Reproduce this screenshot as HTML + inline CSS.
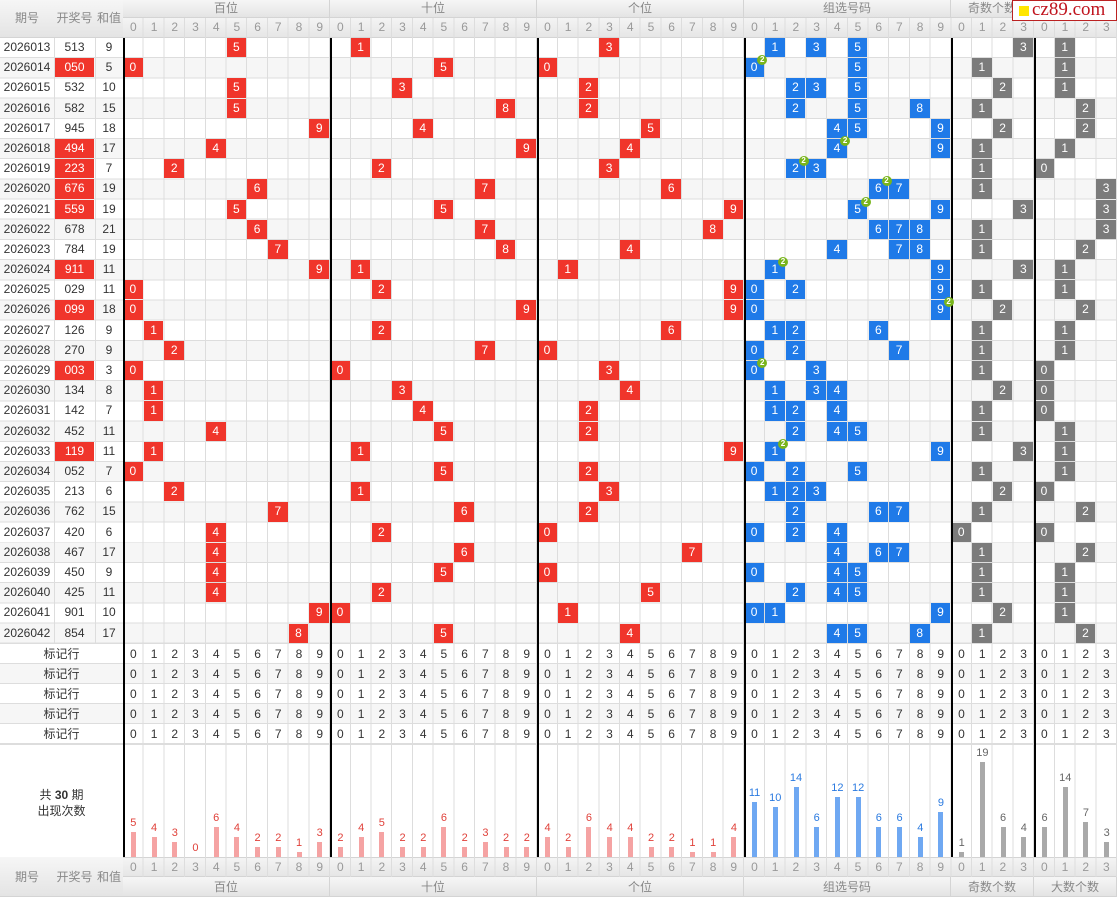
<!DOCTYPE html>
<html><head><meta charset="utf-8"><style>
*{margin:0;padding:0;box-sizing:border-box}
body{width:1117px;height:897px;position:relative;overflow:hidden;background:#fff;font-family:"Liberation Sans","Noto Sans CJK SC",sans-serif;font-size:12px;color:#333}
.a{position:absolute}
.hd{position:absolute;background:linear-gradient(#f6f6f6,#e4e4e4);color:#888;text-align:center;border-right:1px solid #d4d4d4;border-bottom:1px solid #d4d4d4}
.grid{position:absolute;left:0;top:38px;width:1117px;height:606px;
background:repeating-linear-gradient(to bottom,transparent 0 19.19px,#ddd 19.19px 20.19px),repeating-linear-gradient(to bottom,#fff 0 20.19px,#f6f6f6 20.19px 40.38px)}
.vg{position:absolute;left:123px;top:38px;width:994px;height:819px;background:repeating-linear-gradient(to right,transparent 0 19.708px,#ddd 19.708px 20.708px)}
.mk{position:absolute;left:0;top:644px;width:1117px;height:100px;background:repeating-linear-gradient(to bottom,transparent 0 19px,#ddd 19px 20px),repeating-linear-gradient(to bottom,#fff 0 20px,#f6f6f6 20px 40px)}
.vl{position:absolute;width:1px;background:#ddd}
.bl{position:absolute;width:1.5px;background:#000;top:38px;height:819px}
i{position:absolute;font-style:normal;width:19.7px;height:19.2px;line-height:19.2px;text-align:center;color:#fff;font-size:12px}
.R{background:#f0352b}.B{background:#1f7ae8}.G{background:#7b7b7b}
b.g{position:absolute;top:-3px;left:13px;width:10px;height:10px;border-radius:5px;background:#79b51c;color:#fff;font-size:8px;line-height:10px;text-align:center;font-weight:bold;z-index:2}
.c0{left:123px}.c1{left:143.71px}.c2{left:164.42px}.c3{left:185.13px}.c4{left:205.83px}.c5{left:226.54px}.c6{left:247.25px}.c7{left:267.96px}.c8{left:288.67px}.c9{left:309.38px}
.c10{left:330.08px}.c11{left:350.79px}.c12{left:371.5px}.c13{left:392.21px}.c14{left:412.92px}.c15{left:433.63px}.c16{left:454.33px}.c17{left:475.04px}.c18{left:495.75px}.c19{left:516.46px}
.c20{left:537.17px}.c21{left:557.88px}.c22{left:578.58px}.c23{left:599.29px}.c24{left:620px}.c25{left:640.71px}.c26{left:661.42px}.c27{left:682.13px}.c28{left:702.83px}.c29{left:723.54px}
.c30{left:744.25px}.c31{left:764.96px}.c32{left:785.67px}.c33{left:806.38px}.c34{left:827.08px}.c35{left:847.79px}.c36{left:868.5px}.c37{left:889.21px}.c38{left:909.92px}.c39{left:930.63px}
.c40{left:951.33px}.c41{left:972.04px}.c42{left:992.75px}.c43{left:1013.46px}.c44{left:1034.17px}.c45{left:1054.88px}.c46{left:1075.58px}.c47{left:1096.29px}
.r0{top:38px}.r1{top:58.19px}.r2{top:78.38px}.r3{top:98.57px}.r4{top:118.76px}.r5{top:138.95px}.r6{top:159.14px}.r7{top:179.33px}.r8{top:199.52px}.r9{top:219.71px}
.r10{top:239.9px}.r11{top:260.09px}.r12{top:280.28px}.r13{top:300.47px}.r14{top:320.66px}.r15{top:340.85px}.r16{top:361.04px}.r17{top:381.23px}.r18{top:401.42px}.r19{top:421.61px}
.r20{top:441.8px}.r21{top:461.99px}.r22{top:482.18px}.r23{top:502.37px}.r24{top:522.56px}.r25{top:542.75px}.r26{top:562.94px}.r27{top:583.13px}.r28{top:603.32px}.r29{top:623.51px}
.L{position:absolute;left:0;width:123px;height:19.2px;line-height:19.2px;font-size:12px}
.L span{position:absolute;text-align:center}
.L .p{left:0;width:54px}.L .n{left:55px;width:39px}.L .s{left:95px;width:28px}
.L .rd{background:#f0352b;color:#fff;top:0;height:19.2px}
.dr{position:absolute;left:123px;width:994px;display:flex}
.dr span{width:20.708px;text-align:center}
.mr{position:absolute;left:0;width:1117px;height:20px;line-height:20px}
.mr .t{position:absolute;left:0;width:123px;text-align:center}
.bar{position:absolute;width:5px;bottom:40px}
.bl2{position:absolute;width:20.7px;text-align:center;font-size:11px}
</style></head><body>
<div class="grid"></div>
<div class="mk"></div>
<div class="vg"></div>
<div class="vl" style="left:54px;top:38px;height:606px"></div>
<div class="vl" style="left:95px;top:38px;height:606px"></div>
<div class="a" style="left:0;top:643px;width:1117px;height:1px;background:#ddd"></div>
<div class="a" style="left:0;top:744px;width:1117px;height:1px;background:#ddd"></div>

<div class="hd" style="left:0;top:0;width:55px;height:38px;line-height:36px">期号</div>
<div class="hd" style="left:54px;top:0;width:42px;height:38px;line-height:36px">开奖号</div>
<div class="hd" style="left:95px;top:0;width:29px;height:38px;line-height:36px">和值</div>
<div class="hd" style="left:123px;top:0;width:207px;height:18px;line-height:17px">百位</div>
<div class="hd" style="left:330px;top:0;width:207px;height:18px;line-height:17px">十位</div>
<div class="hd" style="left:537px;top:0;width:207px;height:18px;line-height:17px">个位</div>
<div class="hd" style="left:744px;top:0;width:207px;height:18px;line-height:17px">组选号码</div>
<div class="hd" style="left:951px;top:0;width:83px;height:18px;line-height:17px">奇数个数</div>
<div class="hd" style="left:1034px;top:0;width:83px;height:18px;line-height:17px">大数个数</div>
<div class="a" style="left:123px;top:18px;width:994px;height:20px;background:linear-gradient(#f4f4f4,#e6e6e6);border-bottom:1px solid #d4d4d4"></div>
<div class="dr" style="top:18px;height:20px;line-height:19px;color:#999;background:repeating-linear-gradient(to right,transparent 0 19.708px,#ddd 19.708px 20.708px)"><span>0</span><span>1</span><span>2</span><span>3</span><span>4</span><span>5</span><span>6</span><span>7</span><span>8</span><span>9</span><span>0</span><span>1</span><span>2</span><span>3</span><span>4</span><span>5</span><span>6</span><span>7</span><span>8</span><span>9</span><span>0</span><span>1</span><span>2</span><span>3</span><span>4</span><span>5</span><span>6</span><span>7</span><span>8</span><span>9</span><span>0</span><span>1</span><span>2</span><span>3</span><span>4</span><span>5</span><span>6</span><span>7</span><span>8</span><span>9</span><span>0</span><span>1</span><span>2</span><span>3</span><span>0</span><span>1</span><span>2</span><span>3</span></div>

<div class="a" style="left:1012px;top:0;width:105px;height:21px;background:#fff;border:1px solid #b22;"></div>
<div class="a" style="left:1019px;top:6px;width:10px;height:10px;background:#ffe600"></div>
<div class="a" style="left:1032px;top:-1px;font-family:'Liberation Serif',serif;font-size:19px;color:#c0141e;line-height:22px">cz89.com</div>

<div class="L r0"><span class="p">2026013</span><span class="n">513</span><span class="s">9</span></div>
<div class="L r1"><span class="p">2026014</span><span class="n rd">050</span><span class="s">5</span></div>
<div class="L r2"><span class="p">2026015</span><span class="n">532</span><span class="s">10</span></div>
<div class="L r3"><span class="p">2026016</span><span class="n">582</span><span class="s">15</span></div>
<div class="L r4"><span class="p">2026017</span><span class="n">945</span><span class="s">18</span></div>
<div class="L r5"><span class="p">2026018</span><span class="n rd">494</span><span class="s">17</span></div>
<div class="L r6"><span class="p">2026019</span><span class="n rd">223</span><span class="s">7</span></div>
<div class="L r7"><span class="p">2026020</span><span class="n rd">676</span><span class="s">19</span></div>
<div class="L r8"><span class="p">2026021</span><span class="n rd">559</span><span class="s">19</span></div>
<div class="L r9"><span class="p">2026022</span><span class="n">678</span><span class="s">21</span></div>
<div class="L r10"><span class="p">2026023</span><span class="n">784</span><span class="s">19</span></div>
<div class="L r11"><span class="p">2026024</span><span class="n rd">911</span><span class="s">11</span></div>
<div class="L r12"><span class="p">2026025</span><span class="n">029</span><span class="s">11</span></div>
<div class="L r13"><span class="p">2026026</span><span class="n rd">099</span><span class="s">18</span></div>
<div class="L r14"><span class="p">2026027</span><span class="n">126</span><span class="s">9</span></div>
<div class="L r15"><span class="p">2026028</span><span class="n">270</span><span class="s">9</span></div>
<div class="L r16"><span class="p">2026029</span><span class="n rd">003</span><span class="s">3</span></div>
<div class="L r17"><span class="p">2026030</span><span class="n">134</span><span class="s">8</span></div>
<div class="L r18"><span class="p">2026031</span><span class="n">142</span><span class="s">7</span></div>
<div class="L r19"><span class="p">2026032</span><span class="n">452</span><span class="s">11</span></div>
<div class="L r20"><span class="p">2026033</span><span class="n rd">119</span><span class="s">11</span></div>
<div class="L r21"><span class="p">2026034</span><span class="n">052</span><span class="s">7</span></div>
<div class="L r22"><span class="p">2026035</span><span class="n">213</span><span class="s">6</span></div>
<div class="L r23"><span class="p">2026036</span><span class="n">762</span><span class="s">15</span></div>
<div class="L r24"><span class="p">2026037</span><span class="n">420</span><span class="s">6</span></div>
<div class="L r25"><span class="p">2026038</span><span class="n">467</span><span class="s">17</span></div>
<div class="L r26"><span class="p">2026039</span><span class="n">450</span><span class="s">9</span></div>
<div class="L r27"><span class="p">2026040</span><span class="n">425</span><span class="s">11</span></div>
<div class="L r28"><span class="p">2026041</span><span class="n">901</span><span class="s">10</span></div>
<div class="L r29"><span class="p">2026042</span><span class="n">854</span><span class="s">17</span></div>

<i class="R c5 r0">5</i><i class="R c11 r0">1</i><i class="R c23 r0">3</i><i class="B c31 r0">1</i><i class="B c33 r0">3</i><i class="B c35 r0">5</i><i class="G c43 r0">3</i><i class="G c45 r0">1</i>
<i class="R c0 r1">0</i><i class="R c15 r1">5</i><i class="R c20 r1">0</i><i class="B c30 r1">0<b class="g">2</b></i><i class="B c35 r1">5</i><i class="G c41 r1">1</i><i class="G c45 r1">1</i>
<i class="R c5 r2">5</i><i class="R c13 r2">3</i><i class="R c22 r2">2</i><i class="B c32 r2">2</i><i class="B c33 r2">3</i><i class="B c35 r2">5</i><i class="G c42 r2">2</i><i class="G c45 r2">1</i>
<i class="R c5 r3">5</i><i class="R c18 r3">8</i><i class="R c22 r3">2</i><i class="B c32 r3">2</i><i class="B c35 r3">5</i><i class="B c38 r3">8</i><i class="G c41 r3">1</i><i class="G c46 r3">2</i>
<i class="R c9 r4">9</i><i class="R c14 r4">4</i><i class="R c25 r4">5</i><i class="B c34 r4">4</i><i class="B c35 r4">5</i><i class="B c39 r4">9</i><i class="G c42 r4">2</i><i class="G c46 r4">2</i>
<i class="R c4 r5">4</i><i class="R c19 r5">9</i><i class="R c24 r5">4</i><i class="B c34 r5">4<b class="g">2</b></i><i class="B c39 r5">9</i><i class="G c41 r5">1</i><i class="G c45 r5">1</i>
<i class="R c2 r6">2</i><i class="R c12 r6">2</i><i class="R c23 r6">3</i><i class="B c32 r6">2<b class="g">2</b></i><i class="B c33 r6">3</i><i class="G c41 r6">1</i><i class="G c44 r6">0</i>
<i class="R c6 r7">6</i><i class="R c17 r7">7</i><i class="R c26 r7">6</i><i class="B c36 r7">6<b class="g">2</b></i><i class="B c37 r7">7</i><i class="G c41 r7">1</i><i class="G c47 r7">3</i>
<i class="R c5 r8">5</i><i class="R c15 r8">5</i><i class="R c29 r8">9</i><i class="B c35 r8">5<b class="g">2</b></i><i class="B c39 r8">9</i><i class="G c43 r8">3</i><i class="G c47 r8">3</i>
<i class="R c6 r9">6</i><i class="R c17 r9">7</i><i class="R c28 r9">8</i><i class="B c36 r9">6</i><i class="B c37 r9">7</i><i class="B c38 r9">8</i><i class="G c41 r9">1</i><i class="G c47 r9">3</i>
<i class="R c7 r10">7</i><i class="R c18 r10">8</i><i class="R c24 r10">4</i><i class="B c34 r10">4</i><i class="B c37 r10">7</i><i class="B c38 r10">8</i><i class="G c41 r10">1</i><i class="G c46 r10">2</i>
<i class="R c9 r11">9</i><i class="R c11 r11">1</i><i class="R c21 r11">1</i><i class="B c31 r11">1<b class="g">2</b></i><i class="B c39 r11">9</i><i class="G c43 r11">3</i><i class="G c45 r11">1</i>
<i class="R c0 r12">0</i><i class="R c12 r12">2</i><i class="R c29 r12">9</i><i class="B c30 r12">0</i><i class="B c32 r12">2</i><i class="B c39 r12">9</i><i class="G c41 r12">1</i><i class="G c45 r12">1</i>
<i class="R c0 r13">0</i><i class="R c19 r13">9</i><i class="R c29 r13">9</i><i class="B c30 r13">0</i><i class="B c39 r13">9<b class="g">2</b></i><i class="G c42 r13">2</i><i class="G c46 r13">2</i>
<i class="R c1 r14">1</i><i class="R c12 r14">2</i><i class="R c26 r14">6</i><i class="B c31 r14">1</i><i class="B c32 r14">2</i><i class="B c36 r14">6</i><i class="G c41 r14">1</i><i class="G c45 r14">1</i>
<i class="R c2 r15">2</i><i class="R c17 r15">7</i><i class="R c20 r15">0</i><i class="B c30 r15">0</i><i class="B c32 r15">2</i><i class="B c37 r15">7</i><i class="G c41 r15">1</i><i class="G c45 r15">1</i>
<i class="R c0 r16">0</i><i class="R c10 r16">0</i><i class="R c23 r16">3</i><i class="B c30 r16">0<b class="g">2</b></i><i class="B c33 r16">3</i><i class="G c41 r16">1</i><i class="G c44 r16">0</i>
<i class="R c1 r17">1</i><i class="R c13 r17">3</i><i class="R c24 r17">4</i><i class="B c31 r17">1</i><i class="B c33 r17">3</i><i class="B c34 r17">4</i><i class="G c42 r17">2</i><i class="G c44 r17">0</i>
<i class="R c1 r18">1</i><i class="R c14 r18">4</i><i class="R c22 r18">2</i><i class="B c31 r18">1</i><i class="B c32 r18">2</i><i class="B c34 r18">4</i><i class="G c41 r18">1</i><i class="G c44 r18">0</i>
<i class="R c4 r19">4</i><i class="R c15 r19">5</i><i class="R c22 r19">2</i><i class="B c32 r19">2</i><i class="B c34 r19">4</i><i class="B c35 r19">5</i><i class="G c41 r19">1</i><i class="G c45 r19">1</i>
<i class="R c1 r20">1</i><i class="R c11 r20">1</i><i class="R c29 r20">9</i><i class="B c31 r20">1<b class="g">2</b></i><i class="B c39 r20">9</i><i class="G c43 r20">3</i><i class="G c45 r20">1</i>
<i class="R c0 r21">0</i><i class="R c15 r21">5</i><i class="R c22 r21">2</i><i class="B c30 r21">0</i><i class="B c32 r21">2</i><i class="B c35 r21">5</i><i class="G c41 r21">1</i><i class="G c45 r21">1</i>
<i class="R c2 r22">2</i><i class="R c11 r22">1</i><i class="R c23 r22">3</i><i class="B c31 r22">1</i><i class="B c32 r22">2</i><i class="B c33 r22">3</i><i class="G c42 r22">2</i><i class="G c44 r22">0</i>
<i class="R c7 r23">7</i><i class="R c16 r23">6</i><i class="R c22 r23">2</i><i class="B c32 r23">2</i><i class="B c36 r23">6</i><i class="B c37 r23">7</i><i class="G c41 r23">1</i><i class="G c46 r23">2</i>
<i class="R c4 r24">4</i><i class="R c12 r24">2</i><i class="R c20 r24">0</i><i class="B c30 r24">0</i><i class="B c32 r24">2</i><i class="B c34 r24">4</i><i class="G c40 r24">0</i><i class="G c44 r24">0</i>
<i class="R c4 r25">4</i><i class="R c16 r25">6</i><i class="R c27 r25">7</i><i class="B c34 r25">4</i><i class="B c36 r25">6</i><i class="B c37 r25">7</i><i class="G c41 r25">1</i><i class="G c46 r25">2</i>
<i class="R c4 r26">4</i><i class="R c15 r26">5</i><i class="R c20 r26">0</i><i class="B c30 r26">0</i><i class="B c34 r26">4</i><i class="B c35 r26">5</i><i class="G c41 r26">1</i><i class="G c45 r26">1</i>
<i class="R c4 r27">4</i><i class="R c12 r27">2</i><i class="R c25 r27">5</i><i class="B c32 r27">2</i><i class="B c34 r27">4</i><i class="B c35 r27">5</i><i class="G c41 r27">1</i><i class="G c45 r27">1</i>
<i class="R c9 r28">9</i><i class="R c10 r28">0</i><i class="R c21 r28">1</i><i class="B c30 r28">0</i><i class="B c31 r28">1</i><i class="B c39 r28">9</i><i class="G c42 r28">2</i><i class="G c45 r28">1</i>
<i class="R c8 r29">8</i><i class="R c15 r29">5</i><i class="R c24 r29">4</i><i class="B c34 r29">4</i><i class="B c35 r29">5</i><i class="B c38 r29">8</i><i class="G c41 r29">1</i><i class="G c46 r29">2</i>

<div class="mr" style="top:644px"><span class="t">标记行</span></div>
<div class="mr" style="top:664px"><span class="t">标记行</span></div>
<div class="mr" style="top:684px"><span class="t">标记行</span></div>
<div class="mr" style="top:704px"><span class="t">标记行</span></div>
<div class="mr" style="top:724px"><span class="t">标记行</span></div>
<div class="dr" style="top:644px;height:20px;line-height:20px"><span>0</span><span>1</span><span>2</span><span>3</span><span>4</span><span>5</span><span>6</span><span>7</span><span>8</span><span>9</span><span>0</span><span>1</span><span>2</span><span>3</span><span>4</span><span>5</span><span>6</span><span>7</span><span>8</span><span>9</span><span>0</span><span>1</span><span>2</span><span>3</span><span>4</span><span>5</span><span>6</span><span>7</span><span>8</span><span>9</span><span>0</span><span>1</span><span>2</span><span>3</span><span>4</span><span>5</span><span>6</span><span>7</span><span>8</span><span>9</span><span>0</span><span>1</span><span>2</span><span>3</span><span>0</span><span>1</span><span>2</span><span>3</span></div>
<div class="dr" style="top:664px;height:20px;line-height:20px"><span>0</span><span>1</span><span>2</span><span>3</span><span>4</span><span>5</span><span>6</span><span>7</span><span>8</span><span>9</span><span>0</span><span>1</span><span>2</span><span>3</span><span>4</span><span>5</span><span>6</span><span>7</span><span>8</span><span>9</span><span>0</span><span>1</span><span>2</span><span>3</span><span>4</span><span>5</span><span>6</span><span>7</span><span>8</span><span>9</span><span>0</span><span>1</span><span>2</span><span>3</span><span>4</span><span>5</span><span>6</span><span>7</span><span>8</span><span>9</span><span>0</span><span>1</span><span>2</span><span>3</span><span>0</span><span>1</span><span>2</span><span>3</span></div>
<div class="dr" style="top:684px;height:20px;line-height:20px"><span>0</span><span>1</span><span>2</span><span>3</span><span>4</span><span>5</span><span>6</span><span>7</span><span>8</span><span>9</span><span>0</span><span>1</span><span>2</span><span>3</span><span>4</span><span>5</span><span>6</span><span>7</span><span>8</span><span>9</span><span>0</span><span>1</span><span>2</span><span>3</span><span>4</span><span>5</span><span>6</span><span>7</span><span>8</span><span>9</span><span>0</span><span>1</span><span>2</span><span>3</span><span>4</span><span>5</span><span>6</span><span>7</span><span>8</span><span>9</span><span>0</span><span>1</span><span>2</span><span>3</span><span>0</span><span>1</span><span>2</span><span>3</span></div>
<div class="dr" style="top:704px;height:20px;line-height:20px"><span>0</span><span>1</span><span>2</span><span>3</span><span>4</span><span>5</span><span>6</span><span>7</span><span>8</span><span>9</span><span>0</span><span>1</span><span>2</span><span>3</span><span>4</span><span>5</span><span>6</span><span>7</span><span>8</span><span>9</span><span>0</span><span>1</span><span>2</span><span>3</span><span>4</span><span>5</span><span>6</span><span>7</span><span>8</span><span>9</span><span>0</span><span>1</span><span>2</span><span>3</span><span>4</span><span>5</span><span>6</span><span>7</span><span>8</span><span>9</span><span>0</span><span>1</span><span>2</span><span>3</span><span>0</span><span>1</span><span>2</span><span>3</span></div>
<div class="dr" style="top:724px;height:20px;line-height:20px"><span>0</span><span>1</span><span>2</span><span>3</span><span>4</span><span>5</span><span>6</span><span>7</span><span>8</span><span>9</span><span>0</span><span>1</span><span>2</span><span>3</span><span>4</span><span>5</span><span>6</span><span>7</span><span>8</span><span>9</span><span>0</span><span>1</span><span>2</span><span>3</span><span>4</span><span>5</span><span>6</span><span>7</span><span>8</span><span>9</span><span>0</span><span>1</span><span>2</span><span>3</span><span>4</span><span>5</span><span>6</span><span>7</span><span>8</span><span>9</span><span>0</span><span>1</span><span>2</span><span>3</span><span>0</span><span>1</span><span>2</span><span>3</span></div>

<div class="a" style="left:0;top:787px;width:123px;text-align:center;line-height:16px">共 <b>30</b> 期<br>出现次数</div>
<div>
<div class="bar c0" style="margin-left:7.85px;height:25px;background:#f5a3a3"></div><div class="bl2 c0" style="top:817px;color:#e0413a">5</div>
<div class="bar c1" style="margin-left:7.85px;height:20px;background:#f5a3a3"></div><div class="bl2 c1" style="top:822px;color:#e0413a">4</div>
<div class="bar c2" style="margin-left:7.85px;height:15px;background:#f5a3a3"></div><div class="bl2 c2" style="top:827px;color:#e0413a">3</div>
<div class="bl2 c3" style="top:842px;color:#e0413a">0</div>
<div class="bar c4" style="margin-left:7.85px;height:30px;background:#f5a3a3"></div><div class="bl2 c4" style="top:812px;color:#e0413a">6</div>
<div class="bar c5" style="margin-left:7.85px;height:20px;background:#f5a3a3"></div><div class="bl2 c5" style="top:822px;color:#e0413a">4</div>
<div class="bar c6" style="margin-left:7.85px;height:10px;background:#f5a3a3"></div><div class="bl2 c6" style="top:832px;color:#e0413a">2</div>
<div class="bar c7" style="margin-left:7.85px;height:10px;background:#f5a3a3"></div><div class="bl2 c7" style="top:832px;color:#e0413a">2</div>
<div class="bar c8" style="margin-left:7.85px;height:5px;background:#f5a3a3"></div><div class="bl2 c8" style="top:837px;color:#e0413a">1</div>
<div class="bar c9" style="margin-left:7.85px;height:15px;background:#f5a3a3"></div><div class="bl2 c9" style="top:827px;color:#e0413a">3</div>
<div class="bar c10" style="margin-left:7.85px;height:10px;background:#f5a3a3"></div><div class="bl2 c10" style="top:832px;color:#e0413a">2</div>
<div class="bar c11" style="margin-left:7.85px;height:20px;background:#f5a3a3"></div><div class="bl2 c11" style="top:822px;color:#e0413a">4</div>
<div class="bar c12" style="margin-left:7.85px;height:25px;background:#f5a3a3"></div><div class="bl2 c12" style="top:817px;color:#e0413a">5</div>
<div class="bar c13" style="margin-left:7.85px;height:10px;background:#f5a3a3"></div><div class="bl2 c13" style="top:832px;color:#e0413a">2</div>
<div class="bar c14" style="margin-left:7.85px;height:10px;background:#f5a3a3"></div><div class="bl2 c14" style="top:832px;color:#e0413a">2</div>
<div class="bar c15" style="margin-left:7.85px;height:30px;background:#f5a3a3"></div><div class="bl2 c15" style="top:812px;color:#e0413a">6</div>
<div class="bar c16" style="margin-left:7.85px;height:10px;background:#f5a3a3"></div><div class="bl2 c16" style="top:832px;color:#e0413a">2</div>
<div class="bar c17" style="margin-left:7.85px;height:15px;background:#f5a3a3"></div><div class="bl2 c17" style="top:827px;color:#e0413a">3</div>
<div class="bar c18" style="margin-left:7.85px;height:10px;background:#f5a3a3"></div><div class="bl2 c18" style="top:832px;color:#e0413a">2</div>
<div class="bar c19" style="margin-left:7.85px;height:10px;background:#f5a3a3"></div><div class="bl2 c19" style="top:832px;color:#e0413a">2</div>
<div class="bar c20" style="margin-left:7.85px;height:20px;background:#f5a3a3"></div><div class="bl2 c20" style="top:822px;color:#e0413a">4</div>
<div class="bar c21" style="margin-left:7.85px;height:10px;background:#f5a3a3"></div><div class="bl2 c21" style="top:832px;color:#e0413a">2</div>
<div class="bar c22" style="margin-left:7.85px;height:30px;background:#f5a3a3"></div><div class="bl2 c22" style="top:812px;color:#e0413a">6</div>
<div class="bar c23" style="margin-left:7.85px;height:20px;background:#f5a3a3"></div><div class="bl2 c23" style="top:822px;color:#e0413a">4</div>
<div class="bar c24" style="margin-left:7.85px;height:20px;background:#f5a3a3"></div><div class="bl2 c24" style="top:822px;color:#e0413a">4</div>
<div class="bar c25" style="margin-left:7.85px;height:10px;background:#f5a3a3"></div><div class="bl2 c25" style="top:832px;color:#e0413a">2</div>
<div class="bar c26" style="margin-left:7.85px;height:10px;background:#f5a3a3"></div><div class="bl2 c26" style="top:832px;color:#e0413a">2</div>
<div class="bar c27" style="margin-left:7.85px;height:5px;background:#f5a3a3"></div><div class="bl2 c27" style="top:837px;color:#e0413a">1</div>
<div class="bar c28" style="margin-left:7.85px;height:5px;background:#f5a3a3"></div><div class="bl2 c28" style="top:837px;color:#e0413a">1</div>
<div class="bar c29" style="margin-left:7.85px;height:20px;background:#f5a3a3"></div><div class="bl2 c29" style="top:822px;color:#e0413a">4</div>
<div class="bar c30" style="margin-left:7.85px;height:55px;background:#6fa8f2"></div><div class="bl2 c30" style="top:787px;color:#2a7ae0">11</div>
<div class="bar c31" style="margin-left:7.85px;height:50px;background:#6fa8f2"></div><div class="bl2 c31" style="top:792px;color:#2a7ae0">10</div>
<div class="bar c32" style="margin-left:7.85px;height:70px;background:#6fa8f2"></div><div class="bl2 c32" style="top:772px;color:#2a7ae0">14</div>
<div class="bar c33" style="margin-left:7.85px;height:30px;background:#6fa8f2"></div><div class="bl2 c33" style="top:812px;color:#2a7ae0">6</div>
<div class="bar c34" style="margin-left:7.85px;height:60px;background:#6fa8f2"></div><div class="bl2 c34" style="top:782px;color:#2a7ae0">12</div>
<div class="bar c35" style="margin-left:7.85px;height:60px;background:#6fa8f2"></div><div class="bl2 c35" style="top:782px;color:#2a7ae0">12</div>
<div class="bar c36" style="margin-left:7.85px;height:30px;background:#6fa8f2"></div><div class="bl2 c36" style="top:812px;color:#2a7ae0">6</div>
<div class="bar c37" style="margin-left:7.85px;height:30px;background:#6fa8f2"></div><div class="bl2 c37" style="top:812px;color:#2a7ae0">6</div>
<div class="bar c38" style="margin-left:7.85px;height:20px;background:#6fa8f2"></div><div class="bl2 c38" style="top:822px;color:#2a7ae0">4</div>
<div class="bar c39" style="margin-left:7.85px;height:45px;background:#6fa8f2"></div><div class="bl2 c39" style="top:797px;color:#2a7ae0">9</div>
<div class="bar c40" style="margin-left:7.85px;height:5px;background:#a9a9a9"></div><div class="bl2 c40" style="top:837px;color:#666">1</div>
<div class="bar c41" style="margin-left:7.85px;height:95px;background:#a9a9a9"></div><div class="bl2 c41" style="top:747px;color:#666">19</div>
<div class="bar c42" style="margin-left:7.85px;height:30px;background:#a9a9a9"></div><div class="bl2 c42" style="top:812px;color:#666">6</div>
<div class="bar c43" style="margin-left:7.85px;height:20px;background:#a9a9a9"></div><div class="bl2 c43" style="top:822px;color:#666">4</div>
<div class="bar c44" style="margin-left:7.85px;height:30px;background:#a9a9a9"></div><div class="bl2 c44" style="top:812px;color:#666">6</div>
<div class="bar c45" style="margin-left:7.85px;height:70px;background:#a9a9a9"></div><div class="bl2 c45" style="top:772px;color:#666">14</div>
<div class="bar c46" style="margin-left:7.85px;height:35px;background:#a9a9a9"></div><div class="bl2 c46" style="top:807px;color:#666">7</div>
<div class="bar c47" style="margin-left:7.85px;height:15px;background:#a9a9a9"></div><div class="bl2 c47" style="top:827px;color:#666">3</div>
</div>

<div class="bl" style="left:123px"></div><div class="bl" style="left:330px"></div><div class="bl" style="left:537px"></div><div class="bl" style="left:744px"></div><div class="bl" style="left:951px"></div><div class="bl" style="left:1034px"></div>

<div class="hd" style="left:0;top:857px;width:55px;height:40px;line-height:40px">期号</div>
<div class="hd" style="left:54px;top:857px;width:42px;height:40px;line-height:40px">开奖号</div>
<div class="hd" style="left:95px;top:857px;width:29px;height:40px;line-height:40px">和值</div>
<div class="a" style="left:123px;top:857px;width:994px;height:20px;background:linear-gradient(#f4f4f4,#e6e6e6);border-top:1px solid #d4d4d4;border-bottom:1px solid #d4d4d4"></div>
<div class="dr" style="top:857px;height:20px;line-height:20px;color:#999;background:repeating-linear-gradient(to right,transparent 0 19.708px,#ddd 19.708px 20.708px)"><span>0</span><span>1</span><span>2</span><span>3</span><span>4</span><span>5</span><span>6</span><span>7</span><span>8</span><span>9</span><span>0</span><span>1</span><span>2</span><span>3</span><span>4</span><span>5</span><span>6</span><span>7</span><span>8</span><span>9</span><span>0</span><span>1</span><span>2</span><span>3</span><span>4</span><span>5</span><span>6</span><span>7</span><span>8</span><span>9</span><span>0</span><span>1</span><span>2</span><span>3</span><span>4</span><span>5</span><span>6</span><span>7</span><span>8</span><span>9</span><span>0</span><span>1</span><span>2</span><span>3</span><span>0</span><span>1</span><span>2</span><span>3</span></div>
<div class="hd" style="left:123px;top:877px;width:207px;height:20px;line-height:20px">百位</div>
<div class="hd" style="left:330px;top:877px;width:207px;height:20px;line-height:20px">十位</div>
<div class="hd" style="left:537px;top:877px;width:207px;height:20px;line-height:20px">个位</div>
<div class="hd" style="left:744px;top:877px;width:207px;height:20px;line-height:20px">组选号码</div>
<div class="hd" style="left:951px;top:877px;width:83px;height:20px;line-height:20px">奇数个数</div>
<div class="hd" style="left:1034px;top:877px;width:83px;height:20px;line-height:20px">大数个数</div>
</body></html>
